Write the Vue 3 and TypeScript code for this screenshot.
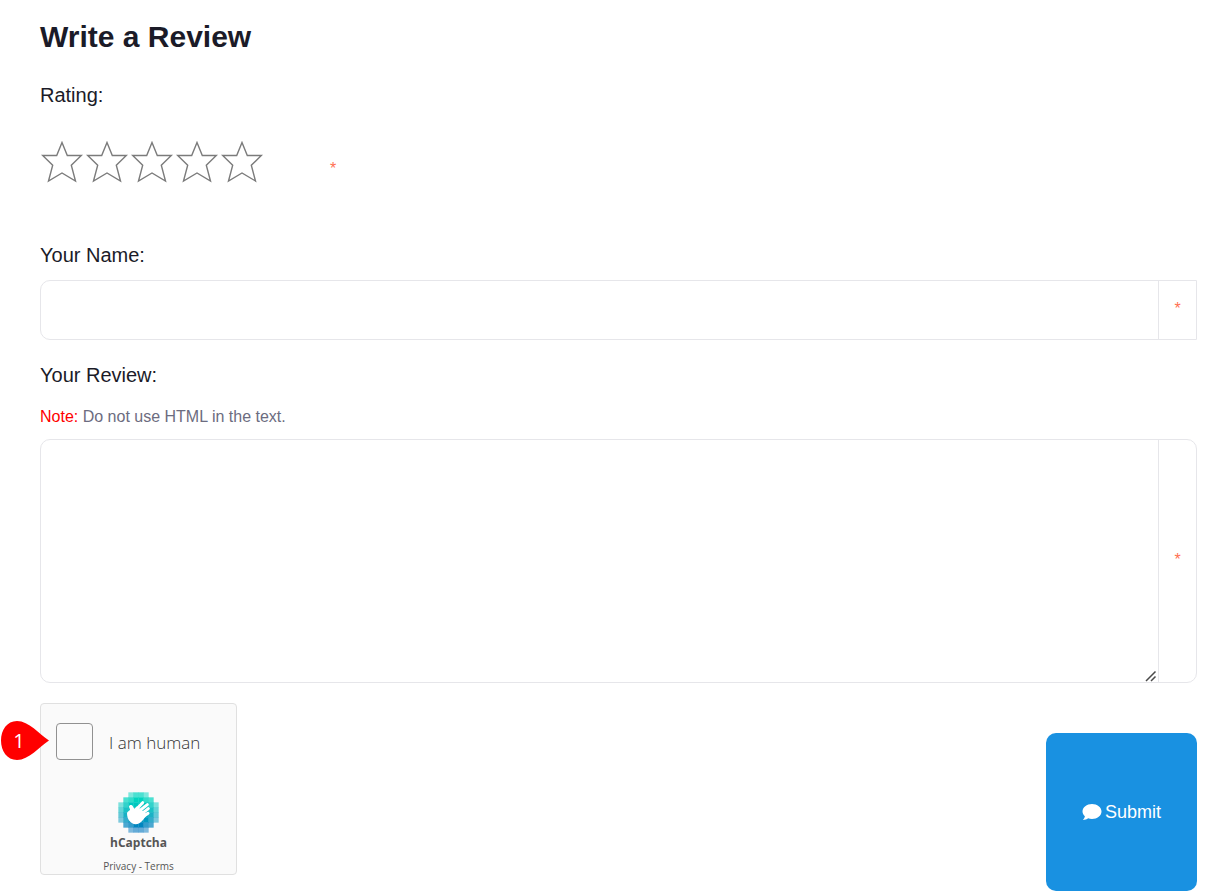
<script setup lang="ts">
import { ref } from 'vue'

const rating = ref(0)
const name = ref('')
const review = ref('')
const human = ref(false)

interface Cell {
  x: number
  y: number
  fill: string
  opacity: number
}

const rowColors = ['#00d4bf', '#00d4bf', '#00c8bf', '#00bbbf', '#00a9bf', '#0098bf', '#0085bf', '#0077bf']
const rowOpacity = [
  [0, 0, 0.5, 0.7, 0.7, 0.5, 0, 0],
  [0, 0.7, 0.8, 1, 1, 0.8, 0.7, 0],
  [0.5, 0.8, 1, 1, 1, 1, 0.8, 0.5],
  [0.6, 0.9, 1, 1, 1, 1, 0.9, 0.6],
  [0.6, 0.9, 1, 1, 1, 1, 0.9, 0.6],
  [0.5, 0.8, 1, 1, 1, 1, 0.8, 0.5],
  [0, 0.7, 0.8, 1, 1, 0.8, 0.7, 0],
  [0, 0, 0.5, 0.6, 0.6, 0.5, 0, 0],
]
const cells: Cell[] = rowOpacity.flatMap((row, y) =>
  row.map((opacity, x) => ({ x: x * 15, y: y * 15, fill: rowColors[y], opacity })).filter((c) => c.opacity > 0),
)
</script>

<template>
  <form class="review" @submit.prevent>
    <h1 class="title">Write a Review</h1>

    <fieldset class="rating">
      <legend class="label">Rating:</legend>
      <div class="rating-row">
        <div class="stars">
          <label v-for="n in 5" :key="n" class="star">
            <input v-model="rating" type="radio" name="rating" :value="n" :aria-label="`${n} of 5`" required />
            <svg viewBox="0 0 45 42" aria-hidden="true">
              <path
                :class="{ on: n <= rating }"
                d="M22 1.5 27.3 14.5H41.3L31.3 24.3 35.5 40 22 32 8.5 40 12.7 24.3 2.7 14.5H16.7Z"
              />
            </svg>
          </label>
        </div>
        <span class="required">*</span>
      </div>
    </fieldset>

    <label class="label" for="name">Your Name:</label>
    <div class="group group-name">
      <input id="name" v-model="name" class="field" type="text" required />
      <span class="addon required">*</span>
    </div>

    <label class="label" for="text">Your Review:</label>
    <p class="note"><span class="note-mark">Note:</span> Do not use HTML in the text.</p>
    <div class="group group-text">
      <div class="text-wrap">
        <textarea id="text" v-model="review" class="field" required></textarea>
        <svg class="grip" viewBox="0 0 12 12" aria-hidden="true">
          <path d="M1 11 10.500 1.500M6 11 10.500 6.500" />
        </svg>
      </div>
      <span class="addon required">*</span>
    </div>

    <div class="actions">
      <div class="captcha">
        <span class="marker">
          <svg viewBox="0 0 49 40" aria-hidden="true">
            <path d="M49 20.500C39 14 29 1 17 1C7 1 1 10 1 20.500S7 40 17 40C29 40 39 27 49 20.500Z" />
          </svg>
          <span class="marker-number">1</span>
        </span>
        <label class="human">
          <input v-model="human" type="checkbox" />
          <span>I am human</span>
        </label>
        <div class="brand">
          <svg class="logo" viewBox="0 0 123 123" aria-hidden="true">
            <rect
              v-for="c in cells"
              :key="`${c.x}-${c.y}`"
              :x="c.x + 1"
              :y="c.y + 1"
              width="16"
              height="16"
              :fill="c.fill"
              :opacity="c.opacity"
            />
            <path
              class="palm"
              d="M27 64C27 58 33 58 36 53L33 44C33 38 42 37 44 42L49 50 57 43 86 66C81 77 74 88 64 94C45 103 27 88 27 64Z"
            />
            <path class="fingers" d="M53 54 74 32M60 60 88 38M68 68 91 50M73 76 90 64" />
          </svg>
          <span class="brand-name">hCaptcha</span>
          <span class="links"><a href="#privacy">Privacy</a> - <a href="#terms">Terms</a></span>
        </div>
      </div>

      <button class="submit" type="submit">
        <svg viewBox="0 0 20 18" aria-hidden="true">
          <path d="M10 1C15.200 1 19.500 4.300 19.500 8.500S15.200 16 10 16C8.600 16 7.300 15.800 6.100 15.300C4.900 16.200 3 17 .8 17C1.800 16 2.700 14.500 2.900 13.200C1.400 11.900 .5 10.300 .5 8.500C.5 4.300 4.800 1 10 1Z" />
        </svg>
        Submit
      </button>
    </div>
  </form>
</template>

<style>
body {
  margin: 0;
  background: #fff;
}
</style>

<style scoped>
* {
  box-sizing: border-box;
}

.review {
  display: flex;
  flex-direction: column;
  padding: 17px 18px 2px 40px;
  font-family: "Liberation Sans", Arial, sans-serif;
  color: #1b1b28;
}

.title {
  margin: 0 0 26px;
  font-size: 30px;
  line-height: 40px;
  font-weight: 700;
}

.rating {
  margin: 0 0 60px;
  padding: 0;
  border: 0;
}

.label {
  padding: 0;
  font-size: 20px;
  line-height: 24px;
}

.rating-row {
  display: flex;
  align-items: center;
  gap: 65px;
  margin-top: 34px;
}

.stars {
  display: flex;
}

.star {
  position: relative;
  width: 45px;
  height: 42px;
}

.star input {
  position: absolute;
  inset: 0;
  width: 100%;
  height: 100%;
  margin: 0;
  opacity: 0;
}

.star svg {
  display: block;
  width: 45px;
  height: 42px;
  fill: none;
  stroke: #7b7b7b;
  stroke-width: 1.4;
}

.star .on {
  fill: #f5c542;
}

.required {
  font-size: 16px;
  line-height: 16px;
  color: #ff6f52;
}

.rating-row .required {
  padding-top: 14px;
}

.group {
  display: flex;
  border: 1px solid #e6e6ea;
  border-radius: 10px;
}

.group-name {
  height: 60px;
  margin: 13px 0 23px;
  border-radius: 10px 0 0 10px;
}

.group-text {
  min-height: 244px;
}

.field {
  flex: 1;
  min-width: 0;
  padding: 16px;
  border: 0;
  outline: 0;
  background: transparent;
  font: inherit;
  font-size: 16px;
  color: inherit;
}

.addon {
  display: flex;
  align-items: center;
  justify-content: center;
  width: 38px;
  padding-bottom: 2px;
  border-left: 1px solid #e6e6ea;
}

.text-wrap {
  position: relative;
  display: flex;
  flex: 1;
}

.text-wrap .field {
  resize: none;
}

.grip {
  position: absolute;
  right: 1px;
  bottom: 0;
  width: 12px;
  height: 12px;
  fill: none;
  stroke: #4a4a4a;
  stroke-width: 1.5;
}

.note {
  margin: 18px 0 10px;
  font-size: 16px;
  line-height: 24px;
  color: #6c6c80;
}

.note-mark {
  color: #f00;
}

.actions {
  display: flex;
  align-items: flex-start;
  justify-content: space-between;
  margin-top: 20px;
}

.captcha {
  position: relative;
  display: flex;
  flex-direction: column;
  width: 197px;
  height: 172px;
  padding: 19px 15px 0;
  border: 1px solid #e0e0e0;
  border-radius: 4px;
  background: #fafafa;
  font-family: "Open Sans", "Noto Sans", sans-serif;
  color: #555;
}

.marker {
  position: absolute;
  left: -41px;
  top: 16px;
  width: 49px;
  height: 40px;
}

.marker svg {
  display: block;
  width: 49px;
  height: 40px;
  fill: #f00;
}

.marker-number {
  position: absolute;
  left: 0;
  top: 0;
  width: 38px;
  font-size: 20px;
  line-height: 42px;
  text-align: center;
  color: #fff;
}

.human {
  display: flex;
  align-items: center;
  gap: 16px;
  font-size: 17px;
  line-height: 24px;
  font-weight: 300;
  color: #333;
}

.human span {
  padding-top: 2px;
}

.human input {
  appearance: none;
  width: 37px;
  height: 37px;
  margin: 0;
  border: 1px solid #919191;
  border-radius: 4px;
  background: #fafafa;
}

.human input:checked {
  background: #00a9bf;
}

.brand {
  display: flex;
  flex-direction: column;
  align-items: center;
  margin-top: 32px;
}

.logo {
  width: 41px;
  height: 41px;
}

.palm {
  fill: #fff;
}

.fingers {
  fill: none;
  stroke: #fff;
  stroke-width: 9;
  stroke-linecap: round;
}

.brand-name {
  font-size: 12px;
  line-height: 20px;
  font-weight: 700;
}

.links {
  margin-top: 6px;
  font-size: 10px;
  line-height: 14px;
}

.links a {
  color: inherit;
  text-decoration: none;
}

.submit {
  display: flex;
  align-items: center;
  justify-content: center;
  gap: 3px;
  width: 151px;
  height: 158px;
  margin-top: 30px;
  padding: 0;
  border: 0;
  border-radius: 10px;
  background: #1991e1;
  font-family: inherit;
  font-size: 18px;
  color: #fff;
}

.submit svg {
  width: 20px;
  height: 18px;
  fill: #fff;
}
</style>
